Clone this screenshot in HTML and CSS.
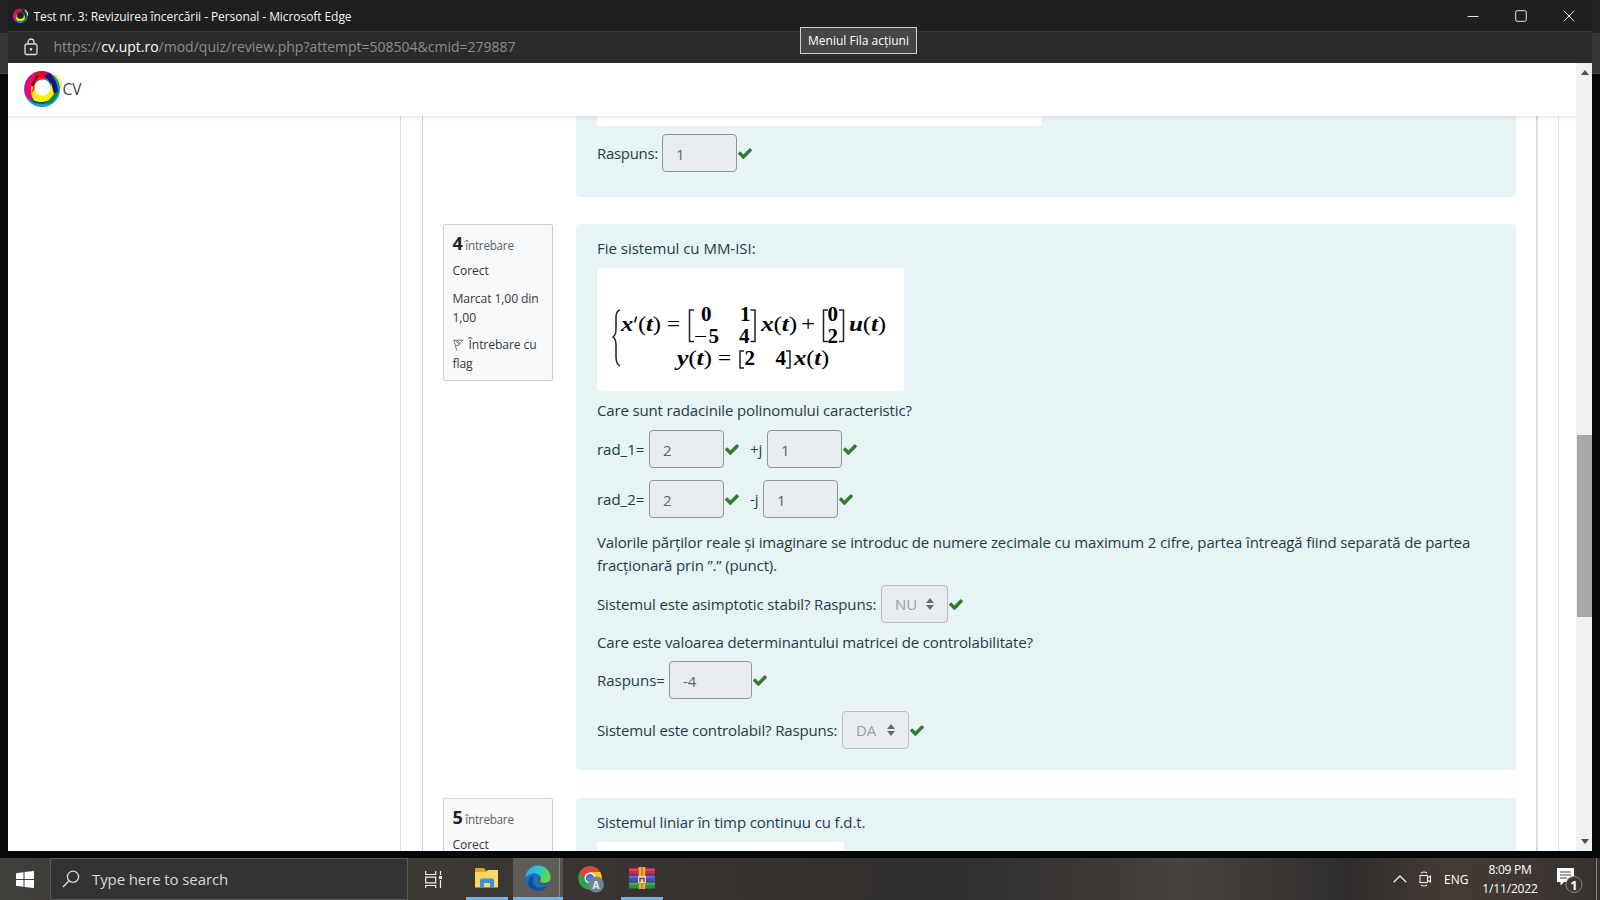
FILE: index.html
```html
<!DOCTYPE html>
<html lang="ro">
<head>
<meta charset="utf-8">
<title>Test nr. 3: Revizuirea încercării</title>
<link rel="stylesheet" href="styles.css">
</head>
<body>
<svg width="0" height="0" class="defs">
  <defs>
    <symbol id="check" viewBox="0 0 1792 1400"><path d="M1671 350q0 40-28 68L919 1142l-136 136q-28 28-68 28t-68-28l-136-136-362-362q-28-28-28-68t28-68l136-136q28-28 68-28t68 28l294 295 656-657q28-28 68-28t68 28l136 136q28 28 28 68z"/></symbol>
    <symbol id="logo" viewBox="0 0 40 40">
      <path d="M29 4l5 3 4 6-1 6-3 3 1-7-5-7z" fill="#f9f04a"/>
      <circle cx="18" cy="20" r="13.500" fill="none" stroke="#12a0c6" stroke-width="9"/>
      <path d="M3 29A18 18 0 0 1 10 4L18 3 25 9 12 12 8 20 9 32z" fill="#f0067c"/>
      <path d="M10 4A17 17 0 0 1 27 5L32 14 24 9 10 15z" fill="#e3063c"/>
      <path d="M25 4Q37 12 34 25L29 28Q31 15 20 7z" fill="#1a1678"/>
      <path d="M30 7Q36 13 36 21L34 24Q34 14 28 6z" fill="#1790c0"/>
      <path d="M35 22Q32 32 25 35L18 34 29 25z" fill="#0a8a48"/>
      <path d="M9 12Q4 25 11 32 18 35 25 31L30 25 27 14 26 22 19 27 12 23 12 14z" fill="#ffee05"/>
      <path d="M11 12l4-4 8 1-8 3-5 9-3 4z" fill="#ef2a10"/>
      <path d="M6 30Q14 35 24 32L19 35 10 34z" fill="#123a80"/>
      <path d="M7 16Q9 9 15 6L11 13 9 18z" fill="#6d0a2a"/>
      <circle cx="18.500" cy="18.500" r="8" fill="#fff"/>
    </symbol>
  </defs>
</svg>
<div class="desktop">
  <div class="window">
    <div class="titlebar">
      <svg class="favicon" viewBox="0 0 40 40"><use href="#logo"/><circle cx="18.500" cy="18.500" r="8.500" fill="#1f1f1f"/></svg>
      <span class="title">Test nr. 3: Revizuirea încercării - Personal - Microsoft Edge</span>
      <div class="controls">
        <svg width="12" height="12" viewBox="0 0 12 12"><path d="M.5 6.500h11"/></svg>
        <svg width="12" height="12" viewBox="0 0 12 12"><rect x=".7" y=".7" width="10.600" height="10.600" rx="1.500"/></svg>
        <svg width="12" height="12" viewBox="0 0 12 12"><path d="M.7.7l10.600 10.600M11.300.7L.7 11.300"/></svg>
      </div>
    </div>
    <div class="urlbar">
      <svg class="lock" width="14" height="18" viewBox="0 0 14 18"><rect x="1" y="6" width="12" height="10.500" rx="1.500"/><path d="M4 6V4a3 3 0 0 1 6 0v2"/><circle cx="7" cy="11.300" r=".7"/></svg>
      <span class="url">https://<b>cv.upt.ro</b>/mod/quiz/review.php?attempt=508504&amp;cmid=279887</span>
    </div>
    <div class="tooltip"><span>Meniul Fila acțiuni</span></div>
    <div class="viewport">
      <div class="page">
        <header class="navbar">
          <svg width="40" height="40" viewBox="0 0 40 40"><use href="#logo"/></svg><span>CV</span>
        </header>
        <div class="columns">
          <main class="region">
            <section class="question">
              <div class="aside"></div>
              <div class="formulation first">
                <div class="picture pic-a"></div>
                <div class="row field gap-8"><span class="w65">Raspuns:</span><span class="input">1</span><svg class="check"><use href="#check"/></svg></div>
              </div>
            </section>
            <section class="question">
              <div class="aside info">
                <div class="no"><b>4</b> întrebare</div>
                <div class="state">Corect</div>
                <div class="grade">Marcat 1,00 din<br>1,00</div>
                <div class="flag"><svg width="11" height="12" viewBox="0 0 11 12"><path d="M.8.8l2.900 10.700M.8 1.200h9.400L7.400 3.600 6 6.200 2.400 6.600M2.400 1.600l4 3.600M4 1.300l2.700 2.500"/></svg> Întrebare cu<br>flag</div>
              </div>
              <div class="formulation main">
                <div class="row s-fie">Fie sistemul cu MM-ISI:</div>
                <div class="picture">
                  <svg class="math" width="307" height="123" viewBox="0 0 307 123">
                    <g class="lines"><path d="M23 42q-4 1-4 7v12q0 6-3 8q3 2 3 8v12q0 7 4 9"/><path d="M97 42h-4.500v31.500h4.500M153.500 42h4.500v31.500h-4.500M231 42h-4.500v31.500h4.500M242 42h4.500v31.500h-4.500M147 83h-4v17h4M189 83h4v17h-4"/></g>
                    <text x="24" y="63" textLength="12" lengthAdjust="spacingAndGlyphs" class="i">x</text><path d="M39.500 48.500l-1.800 6" stroke="#000" stroke-width="1.500"/>
                    <text x="41" y="63" textLength="23" lengthAdjust="spacingAndGlyphs"><tspan class="n">(</tspan><tspan class="i">t</tspan><tspan class="n">)</tspan></text>
                    <text x="70" y="63" textLength="13" lengthAdjust="spacingAndGlyphs" class="n">=</text>
                    <text x="104" y="53" class="d">0</text><text x="97" y="75" textLength="13" lengthAdjust="spacingAndGlyphs" class="n">−</text><text x="111.500" y="75" class="d">5</text>
                    <text x="143" y="53" class="d">1</text><text x="142" y="75" class="d">4</text>
                    <text x="164" y="63" textLength="36" lengthAdjust="spacingAndGlyphs"><tspan class="i">x</tspan><tspan class="n">(</tspan><tspan class="i">t</tspan><tspan class="n">)</tspan></text>
                    <text x="204" y="63" textLength="14" lengthAdjust="spacingAndGlyphs" class="n">+</text>
                    <text x="230.500" y="53" class="d">0</text><text x="230.500" y="75" class="d">2</text>
                    <text x="252" y="63" textLength="37" lengthAdjust="spacingAndGlyphs"><tspan class="i">u</tspan><tspan class="n">(</tspan><tspan class="i">t</tspan><tspan class="n">)</tspan></text>
                    <text x="80" y="97" textLength="35" lengthAdjust="spacingAndGlyphs"><tspan class="i">y</tspan><tspan class="n">(</tspan><tspan class="i">t</tspan><tspan class="n">)</tspan></text>
                    <text x="121" y="97" textLength="13" lengthAdjust="spacingAndGlyphs" class="n">=</text>
                    <text x="147.500" y="97" class="d">2</text><text x="178.500" y="97" class="d">4</text>
                    <text x="197" y="97" textLength="35" lengthAdjust="spacingAndGlyphs"><tspan class="i">x</tspan><tspan class="n">(</tspan><tspan class="i">t</tspan><tspan class="n">)</tspan></text>
                  </svg>
                </div>
                <div class="row s-care">Care sunt radacinile polinomului caracteristic?</div>
                <div class="row field gap-7"><span class="w52">rad_1=</span><span class="input">2</span><svg class="check"><use href="#check"/></svg><span class="w17">+j</span><span class="input">1</span><svg class="check"><use href="#check"/></svg></div>
                <div class="row field gap-12"><span class="w52">rad_2=</span><span class="input">2</span><svg class="check"><use href="#check"/></svg><span class="w13">-j</span><span class="input">1</span><svg class="check"><use href="#check"/></svg></div>
                <div class="row para gap-12">Valorile părților reale și imaginare se introduc de numere zecimale cu maximum 2 cifre, partea întreagă fiind separată de partea<br>fracționară prin ”.” (punct).</div>
                <div class="row field gap-8"><span class="w284">Sistemul este asimptotic stabil? Raspuns:</span><span class="input select">NU<svg width="8" height="12" viewBox="0 0 8 12"><path d="M0 5l4-5 4 5zM0 7l4 5 4-5z"/></svg></span><svg class="check"><use href="#check"/></svg></div>
                <div class="row gap-8 s-det">Care este valoarea determinantului matricei de controlabilitate?</div>
                <div class="row field gap-7"><span class="w72 loose">Raspuns=</span><span class="input wide">-4</span><svg class="check"><use href="#check"/></svg></div>
                <div class="row field gap-12"><span class="w245">Sistemul este controlabil? Raspuns:</span><span class="input select">DA<svg width="8" height="12" viewBox="0 0 8 12"><path d="M0 5l4-5 4 5zM0 7l4 5 4-5z"/></svg></span><svg class="check"><use href="#check"/></svg></div>
              </div>
            </section>
            <section class="question">
              <div class="aside info">
                <div class="no"><b>5</b> întrebare</div>
                <div class="state">Corect</div>
              </div>
              <div class="formulation last">
                <div class="row s-lin">Sistemul liniar în timp continuu cu f.d.t.</div>
                <div class="picture pic-b"></div>
              </div>
            </section>
          </main>
        </div>
      </div>
      <div class="scrollbar">
        <svg width="8" height="5" viewBox="0 0 8 5"><path d="M0 5l4-5 4 5z"/></svg>
        <div class="thumb"></div>
        <svg width="8" height="5" viewBox="0 0 8 5"><path d="M0 0l4 5 4-5z"/></svg>
      </div>
    </div>
  </div>
  <footer class="taskbar">
    <div class="start"><svg width="18" height="17" viewBox="0 0 18 17"><path d="M0 2.200L7.500 1.200V8H0zM8.500 1.100L18 0v8H8.500zM0 9h7.500v6.800L0 14.800zM8.500 9H18v8L8.500 15.900z"/></svg></div>
    <div class="search"><svg width="18" height="18" viewBox="0 0 18 18"><circle cx="11" cy="6.800" r="5.600"/><path d="M7 10.800L1 17"/></svg><span>Type here to search</span></div>
    <div class="task view"><svg width="18" height="17" viewBox="0 0 18 17"><path d="M.7 0v3.500h10V0M.7 6.200h10v5.600H.7zM.7 17v-2.500h10V17M15.500 0v4M15.500 9v8"/><rect x="14.700" y="5.500" width="1.700" height="2"/></svg></div>
    <div class="task open"><svg width="24" height="20" viewBox="0 0 24 20"><path d="M0 1q0-1 1-1h8l2 3h12v16H0z" fill="#e9a21d"/><path d="M0 4h11l2-2h10v17.500H0z" fill="#fcd667"/><path d="M5 20v-8q0-1.500 1.500-1.500h11Q19 10.500 19 12v8h-4v-5H9v5z" fill="#3e93d8"/></svg></div>
    <div class="task open active"><svg width="26" height="26" viewBox="0 0 26 26"><defs><linearGradient id="eg" x1="0" y1="0" x2="1" y2=".4"><stop offset="0" stop-color="#2aa8e0"/><stop offset=".5" stop-color="#2fc3cf"/><stop offset="1" stop-color="#63d94b"/></linearGradient></defs><circle cx="13" cy="13" r="12.700" fill="#1473c4"/><path d="M.5 12A12.600 12.600 0 0 1 25.600 12q0 6-6.300 6-5.300 0-4-3.200 1.300-2.300-.8-4.500Q8 5.500.5 12z" fill="url(#eg)"/><path d="M9 11q-3 7 2 10.500 5 3 12-1.300-4 6-10.500 5.500Q2 24 3.500 16 4.500 11 9 11z" fill="#0d4f97"/><path d="M15.200 11.500q1.200 1.500 0 3.300-1 3.200 4 3.200 3 0 4.900-1.500-.6 3-4.100 4-6 1-7.500-3.500-.8-4.500 2.700-5.500z" fill="#5c5752"/></svg></div>
    <div class="task chrome"><svg width="27" height="27" viewBox="0 0 27 27"><circle cx="12" cy="12" r="11.800" fill="#2da14c"/><path d="M1.800 6A11.800 11.800 0 0 1 22.200 6H12L7 14z" fill="#e24538"/><path d="M12 6h10.200a11.800 11.800 0 0 1-9.400 17.800L17 15z" fill="#fbc71d"/><circle cx="12" cy="12" r="5.500" fill="#fff"/><circle cx="12" cy="12" r="4.300" fill="#3f7de0"/><circle cx="18" cy="18.500" r="8" fill="#6d8491"/><text x="18" y="22.500" text-anchor="middle">A</text></svg></div>
    <div class="task open rar"><svg width="26" height="22" viewBox="0 0 26 22"><rect y="1" width="26" height="6.500" rx="1" fill="#c6294a"/><rect y="8" width="26" height="6.500" rx="1" fill="#474ec0"/><rect y="15" width="26" height="6.500" rx="1" fill="#259245"/><path d="M0 3h26M0 10h26M0 17h26" stroke="#fff" stroke-opacity=".3"/><path d="M9.500 0h7v22h-7z" fill="#d98921"/><path d="M11 0v9m4-9v9M11 17v5m4-5v5" stroke="#f8cf65"/><rect x="9" y="9" width="8" height="7" rx="1" fill="#ded6bd"/><path d="M11 15v-3.500h4V15" fill="none" stroke="#8b4c20" stroke-width="1.500"/></svg></div>
    <div class="tray">
      <svg class="t-up" width="14" height="8" viewBox="0 0 14 8"><path d="M.7 7.300L7 1l6.300 6.300"/></svg>
      <svg class="t-cam" width="13" height="16" viewBox="0 0 13 16"><rect x="1" y="4.500" width="7.500" height="7"/><path d="M8.500 7l3-2v6l-3-2M2 2q3-2 6 0M2 14q3 2 6 0"/></svg>
      <span class="t-lang">ENG</span>
      <div class="clock"><span>8:09 PM</span><span class="date">1/11/2022</span></div>
      <svg class="t-note" width="26" height="26" viewBox="0 0 26 26"><path d="M0 0h17v14H7l-3.500 3.500V14H0z" fill="#fff"/><path d="M3 4h11M3 7h11M3 10h7" stroke="#444"/><circle cx="17" cy="16.500" r="8" fill="#3a3735" stroke="#8a8886"/><text x="17" y="21.500" text-anchor="middle">1</text></svg>
    </div>
  </footer>
</div>
</body>
</html>
```
FILE: styles.css
```css
* { box-sizing: border-box; }
body {
  margin: 0;
  width: 1600px;
  height: 900px;
  overflow: hidden;
  font-family: "Open Sans", "Noto Sans", sans-serif;
}
svg { display: block; flex: none; }
.defs { position: absolute; }
.desktop {
  height: 900px;
  display: flex;
  flex-direction: column;
  background: linear-gradient(#232323 0 33px, #353535 33px 73px, #444 73px 74px, #05090c 74px);
}
.window {
  position: relative;
  height: 858px;
  padding: 0 8px 7px 7.5px;
  display: flex;
  flex-direction: column;
}
.titlebar {
  height: 32px;
  background: #1f1f1f;
  display: flex;
  align-items: center;
  padding: 0 17px 0 5px;
  border-bottom: 1px solid #383838;
}
.favicon { width: 16px; height: 16px; }
.title {
  margin: 2px 0 0 5px;
  font-size: 12px;
  color: #f5f5f5;
  letter-spacing: -.07px;
  white-space: nowrap;
}
.controls { margin: 1px 0 0 auto; display: flex; gap: 36px; }
.controls svg { fill: none; stroke: #e8e8e8; stroke-width: 1; }
.urlbar {
  height: 31px;
  background: #2b2b2b;
  display: flex;
  align-items: center;
  padding: 0 0 2px 16px;
}
.lock { fill: none; stroke: #ddd; stroke-width: 1.3; }
.url {
  margin-left: 16px;
  color: #8d8d8d;
  font-size: 14px;
  white-space: nowrap;
}
.url b { font-weight: 400; color: #fff; }
.tooltip {
  position: absolute;
  left: 800px;
  top: 27px;
  width: 117px;
  height: 27px;
  border: 1px solid #d0d0d0;
  background: #464646;
  color: #fff;
  font-size: 12px;
  letter-spacing: 0;
  line-height: 26px;
  text-align: center;
  white-space: nowrap;
}
.viewport { flex: 1; min-height: 0; display: flex; background: #fff; }
.page { flex: 1; overflow: hidden; display: flex; flex-direction: column; }
.navbar {
  height: 53px;
  flex: none;
  z-index: 1;
  background: #fff;
  box-shadow: 0 2px 4px rgba(0, 0, 0, .09);
  display: flex;
  align-items: center;
  padding: 0 0 2px 16px;
  color: #444;
  font-size: 15.5px;
}
.navbar span { margin-left: -1px; }
.columns {
  flex: 1;
  min-height: 0;
  margin-left: 392.500px;
  margin-right: 17px;
  border-left: 1px solid #dedede;
  border-right: 1px solid #e2e2e2;
  padding: 0 20px 0 21px;
}
.region {
  height: 100%;
  border-left: 1px solid #d0d0d0;
  border-right: 2px solid #ddd;
  padding: 0 20px 0 20px;
  overflow: hidden;
}
.question { display: flex; align-items: flex-start; margin-bottom: 28px; }
.aside { width: 110px; flex: none; margin-right: 23px; }
.info {
  height: 157px;
  border: 1px solid #cad0d7;
  border-radius: 2px;
  background: #f8f9fa;
  padding: 6px 0 0 8.500px;
  color: #343a40;
  font-size: 12.2px;
  line-height: 19px;
  letter-spacing: -.13px;
  white-space: nowrap;
}
.no { height: 24px; line-height: 24px; color: #5d6267; font-size: 11.7px; letter-spacing: -.25px; }
.no b { font-size: 18px; color: #1d2125; }
.state { margin-top: 6px; }
.grade { margin-top: 9px; }
.flag { margin-top: 8px; }
.flag svg { display: inline-block; fill: none; stroke: #777; stroke-width: 1; margin-right: 2px; vertical-align: -2px; }
.formulation {
  flex: 1;
  background: #e7f3f5;
  border-radius: 4px;
  padding: 0 20px 0 21px;
  color: #1f3b46;
  font-size: 15px;
  letter-spacing: -.145px;
  line-height: 23px;
}
.first { height: 80.500px; border-radius: 0 0 4px 4px; margin-bottom: -.5px; }
.main { height: 546px; padding-top: 13px; }
.last { height: 200px; padding-top: 13px; }
.picture { width: 307px; height: 123px; background: #fff; margin-top: 8px; }
.pic-a { width: 445px; height: 10px; margin: 0; }
.pic-b { width: 247px; }
.row { height: 23px; white-space: nowrap; }
.field { height: 38px; display: flex; align-items: center; }
.para { height: 46px; margin-top: 13px; }
.gap-7 { margin-top: 7px; }
.gap-8 { margin-top: 8px; }
.gap-12 { margin-top: 12px; }
.para.gap-12 { margin-top: 13px; }
.s-fie, .loose, .w52 { letter-spacing: -.02px; }
.s-lin { letter-spacing: -.12px; }
.s-care { margin-top: 8px; margin-bottom: 8px; }
.w65 { width: 65px; letter-spacing: -.3px; }
.w52 { width: 52px; }
.w17 { width: 17px; margin-left: 10px; }
.w13 { width: 13px; margin-left: 10px; }
.w284 { width: 284px; }
.w72 { width: 72px; }
.w245 { width: 245px; }
.input {
  width: 75px;
  height: 38px;
  border: 1px solid #8f959e;
  border-radius: 4px;
  background: #e9ecef;
  color: #5d646b;
  padding-left: 13px;
  line-height: 38px;
}
.wide { width: 83px; }
.select {
  width: 66.500px;
  border-color: #b8bdc3;
  color: #9a9ea3;
  display: flex;
  align-items: center;
  justify-content: space-between;
  padding-right: 13px;
}
.select svg { fill: #666b70; }
.check { width: 16px; height: 13px; fill: #357a32; }
.math text { font: bold 20px "Liberation Serif", serif; fill: #000; }
.math .i { font-style: italic; font-weight: bold; }
.math .n { font-weight: 400; font-style: normal; }
.math .d { font-size: 21px; }
.lines { fill: none; stroke: #222; stroke-width: 1.5; }
.scrollbar {
  width: 16px;
  background: #f0f0f0;
  display: flex;
  flex-direction: column;
  align-items: center;
  padding: 7px 0 7px 1px;
}
.scrollbar svg { fill: #505050; }
.thumb { width: 15px; height: 182px; margin: 360px 0 auto; background: #a8a8a8; }
.taskbar {
  height: 42px;
  display: flex;
  background: linear-gradient(90deg, #403e3b 0, #3c3834 420px, #37322f 700px, #302f2e 950px, #3b3836 1100px, #464340 1180px, #2f2d2c 1350px, #453b35 1450px, #373230 1600px);
}
.start { width: 50px; display: flex; align-items: center; justify-content: center; }
.start svg { fill: #fff; }
.search {
  width: 358px;
  margin-right: 1px;
  border: 1px solid #585858;
  background: #333;
  display: flex;
  align-items: center;
  padding-left: 11px;
  color: #d8d8d8;
  font-size: 15px;
  letter-spacing: -.1px;
}
.search svg { fill: none; stroke: #e0e0e0; stroke-width: 1.3; }
.search span { margin-left: 12px; }
.task { width: 42px; margin-right: 5px; display: flex; align-items: center; justify-content: center; }
.view { width: 50px; margin-right: 7px; }
.view svg { fill: none; stroke: #eee; stroke-width: 1.2; }
.open { border-bottom: 3px solid #76b4e8; }
.active { width: 50px; margin-right: 3px; background: linear-gradient(90deg, #5f5b57 46px, #87827e 46px 47px, #55514e 47px); }
.chrome { width: 50px; margin-right: 5px; }
.chrome text { font: bold 10px "Open Sans", sans-serif; fill: #e8eef2; }
.tray { margin-left: auto; display: flex; align-items: center; color: #fff; border-right: 1px solid #8a8583; margin-right: 3px; padding-right: 13px; }
.t-up, .t-cam { fill: none; stroke: #eee; stroke-width: 1.3; }
.t-cam { margin-left: 12px; stroke-width: 1.1; }
.t-lang { margin-left: 12px; font-size: 12px; width: 25px; }
.clock { width: 60px; margin-left: 11px; display: flex; flex-direction: column; align-items: center; font-size: 12px; line-height: 19px; letter-spacing: -.25px; white-space: nowrap; }
.date { letter-spacing: -.15px; }
.t-note { margin: 3px 0 0 17px; }
.t-note text { font: bold 13px "Open Sans", sans-serif; fill: #fff; }
```
